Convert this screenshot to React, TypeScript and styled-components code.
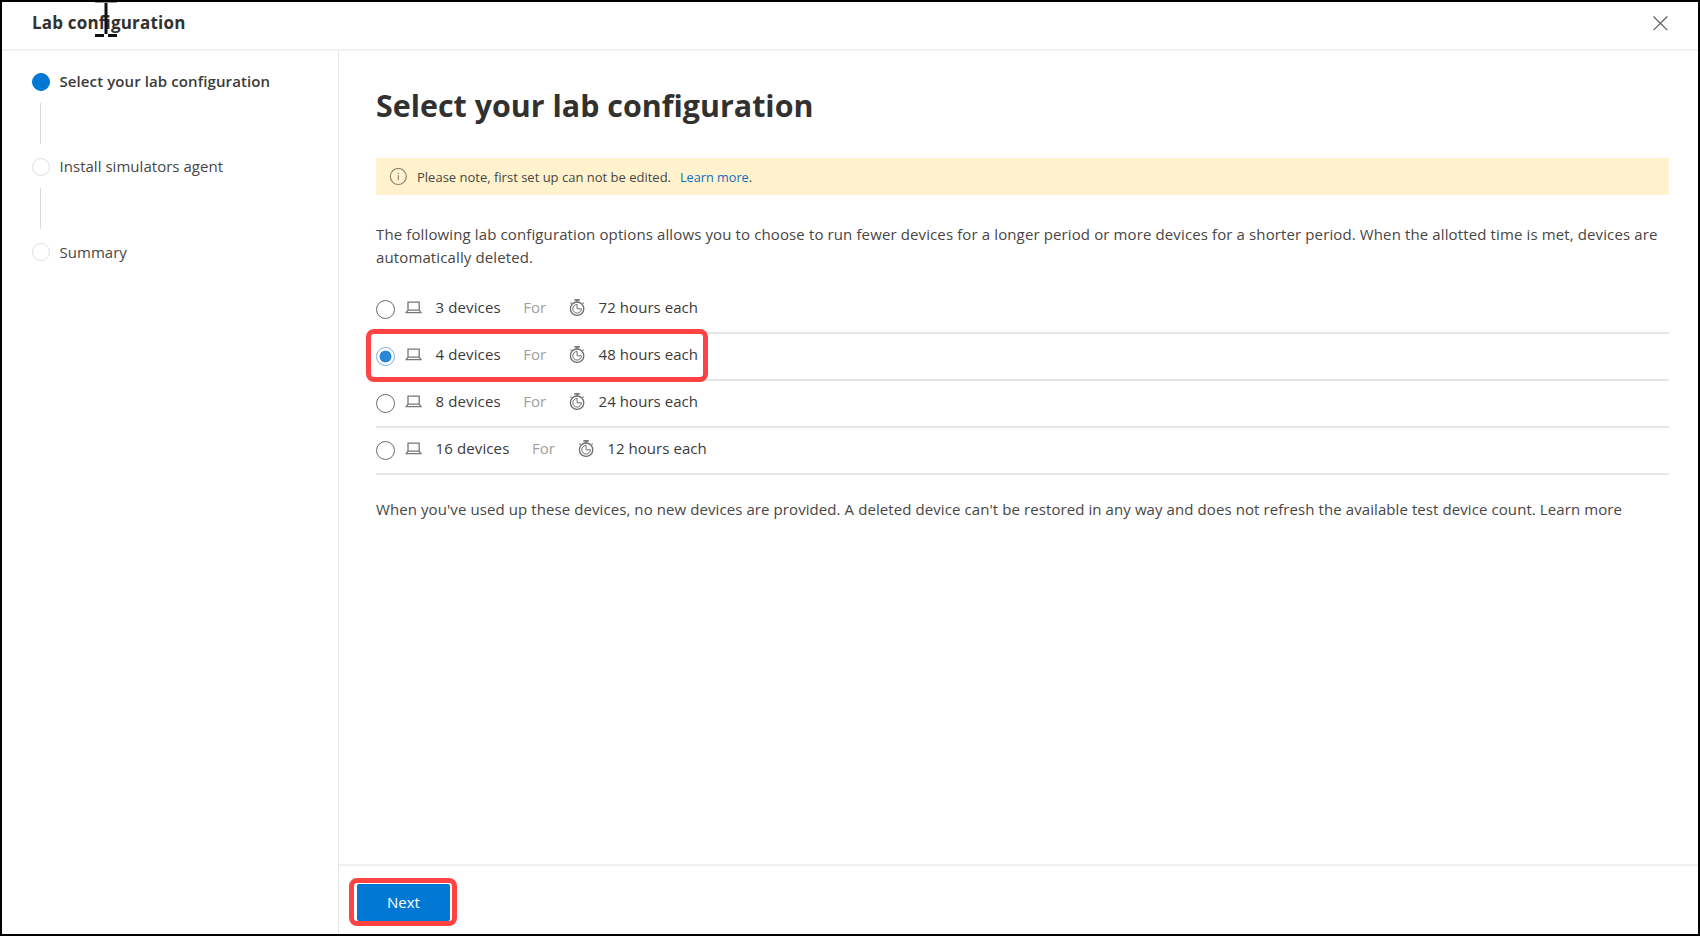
import React, { useState } from 'react';
import styled, { createGlobalStyle } from 'styled-components';

const GlobalStyle = createGlobalStyle`
  *, *::before, *::after { box-sizing: border-box; }
  body {
    margin: 0;
    background: #fff;
    color: #484644;
    font-family: 'Open Sans', 'Noto Sans', sans-serif;
    font-size: 15px;
  }
  h1, h2, p, ol, ul { margin: 0; padding: 0; list-style: none; }
`;

const Window = styled.div`
  display: flex;
  flex-direction: column;
  width: 1700px;
  height: 936px;
  border: 2px solid #000;
  background: #fff;
`;

const Header = styled.header`
  display: flex;
  justify-content: space-between;
  height: 49px;
  padding: 0 30px 0 30px;
  border-bottom: 2px solid #f2f2f2;
`;

const HeaderTitle = styled.h2`
  position: relative;
  height: 40px;
  font-size: 17px;
  line-height: 41px;
  font-weight: 700;
  letter-spacing: 0.19px;
  color: #323130;
`;

const TextCursor = styled.svg`
  position: absolute;
  left: 63px;
  top: 0;
`;

const CloseButton = styled.button`
  display: flex;
  align-self: flex-start;
  margin-top: 14px;
  padding: 0;
  border: 0;
  background: none;
`;

const Body = styled.div`
  display: flex;
  flex: 1;
  min-height: 0;
`;

const Sidebar = styled.nav`
  width: 337px;
  padding: 21px 0 0 30px;
  border-right: 1px solid #e6e6e6;
`;

const Step = styled.div`
  display: flex;
  align-items: center;
  gap: 9.5px;
  height: 19px;
`;

const StepDot = styled.span<{ $active?: boolean }>`
  width: 18px;
  height: 18px;
  border-radius: 50%;
  border: 1.5px solid ${(p) => (p.$active ? '#0078d4' : '#e0e0e0')};
  background: ${(p) => (p.$active ? '#0078d4' : '#fff')};
`;

const StepLabel = styled.span<{ $active?: boolean }>`
  line-height: 19px;
  font-weight: ${(p) => (p.$active ? 600 : 400)};
  letter-spacing: ${(p) => (p.$active ? '0.1px' : '0.03px')};
  color: ${(p) => (p.$active ? '#3b3a39' : '#484644')};
`;

const Connector = styled.div`
  width: 1px;
  height: 41px;
  margin: 12px 0 13.4px 8px;
  background: #d9d9d9;
`;

const Main = styled.main`
  display: flex;
  flex: 1;
  flex-direction: column;
  min-width: 0;
`;

const Content = styled.section`
  flex: 1;
  padding: 33px 29px 0 37px;
`;

const PageTitle = styled.h1`
  height: 40px;
  line-height: 44px;
  font-size: 30.4px;
  font-weight: 700;
  letter-spacing: 0.01px;
  color: #323130;
  white-space: nowrap;
`;

const Notice = styled.div`
  display: flex;
  align-items: center;
  height: 37px;
  margin-top: 34px;
  padding-left: 13px;
  background: #fff2cc;
  font-size: 13px;
  color: #484644;
`;

const NoticeText = styled.span`
  width: 263px;
  margin-left: 10px;
  line-height: 37px;
  padding-top: 1px;
`;

const NoticeLink = styled.a`
  padding-top: 1px;
  line-height: 37px;
  font-size: 12.7px;
  color: #106ebe;

  span { color: #484644; }
`;

const Intro = styled.p`
  height: 46px;
  margin-top: 28px;
  line-height: 23px;
  letter-spacing: 0.12px;
`;

const Options = styled.div`
  margin-top: 18px;
`;

const Option = styled.label`
  position: relative;
  display: flex;
  height: 47px;
  padding-top: 11px;
  border-bottom: 2px solid #e6e6e6;
  line-height: 18px;
  color: #3b3a39;
`;

const Radio = styled.input`
  appearance: none;
  width: 19px;
  height: 19px;
  margin: 2px 10px 0 0;
  border: 1.3px solid #6b6b6b;
  border-radius: 50%;

  &:checked {
    border-color: #7aaee8;
    background: radial-gradient(circle, #2b88d8 5.6px, transparent 6.3px);
  }
`;

const LaptopSlot = styled.svg`
  margin: 3px 13.5px 0 0;
`;

const Quantity = styled.span`
  margin-right: 22.5px;
  letter-spacing: 0.12px;
`;

const Joiner = styled.span`
  margin-right: 23px;
  color: #a19f9d;
`;

const TimerSlot = styled.svg`
  margin: 0 12.5px 0 0;
`;

const Duration = styled.span`
  letter-spacing: 0.05px;
`;

const OptionHighlight = styled.span`
  position: absolute;
  z-index: 1;
  left: -10px;
  top: -5px;
  width: 342px;
  height: 53px;
  border: 5px solid #ff4343;
  border-radius: 8px;
`;

const Footnote = styled.p`
  margin-top: 23px;
  line-height: 23px;
  letter-spacing: 0.085px;
  white-space: nowrap;
`;

const Footer = styled.footer`
  height: 70px;
  padding: 12px 0 0 10px;
  border-top: 2px solid #f0f0f0;
`;

const ButtonHighlight = styled.div`
  width: 108px;
  height: 48px;
  padding: 1px 2px 0 3px;
  border: 5px solid #ff4343;
  border-radius: 8px;
`;

const NextButton = styled.button`
  display: block;
  width: 93px;
  height: 37px;
  padding: 0;
  border: 0;
  border-radius: 2px;
  background: #0078d4;
  color: #fff;
  font-family: inherit;
  font-size: 15px;
  line-height: 37px;
`;

const LaptopIcon = () => (
  <LaptopSlot width="17" height="13" viewBox="0 0 17 13" fill="none" stroke="#777" strokeWidth="1.3">
    <path d="M3 9.4V1.2H14.2V9.4M3 9.2H14.2M3 9.2L1.2 11.7H16L14.2 9.2" />
  </LaptopSlot>
);

const TimerIcon = () => (
  <TimerSlot width="17" height="19" viewBox="0 0 17 19" fill="none" stroke="#6e6e6e" strokeWidth="1.3">
    <circle cx="8.1" cy="10.7" r="6.7" />
    <path d="M5.4 1.9H10.8" strokeWidth="1.6" />
    <path d="M8.1 2V4.2M2.6 5.6L1.6 4.6M13.6 5.6L14.6 4.6" />
    <path d="M8.1 6.4V10.8H12.4A4.3 4.3 0 1 1 8.1 6.5" strokeWidth="1" />
  </TimerSlot>
);

const InfoIcon = () => (
  <svg width="18" height="18" viewBox="0 0 18 18" fill="none" stroke="#8a8577">
    <circle cx="9.3" cy="8.5" r="8" strokeWidth="1.2" />
    <path d="M9.3 7.2V12.3M9.3 4.7V6" strokeWidth="1.2" />
  </svg>
);

const CloseIcon = () => (
  <svg width="15" height="15" viewBox="0 0 15 15" stroke="#605e5c" strokeWidth="1.2">
    <path d="M0.5 0.5L14.3 14.1M14.3 0.5L0.5 14.1" />
  </svg>
);

const steps = ['Select your lab configuration', 'Install simulators agent', 'Summary'];

const options = [
  { devices: 3, hours: 72 },
  { devices: 4, hours: 48 },
  { devices: 8, hours: 24 },
  { devices: 16, hours: 12 },
];

export default function App() {
  const [selected, setSelected] = useState(4);

  return (
    <>
      <GlobalStyle />
      <Window>
        <Header>
          <HeaderTitle>
            Lab configuration
            <TextCursor width="22" height="36" viewBox="0 0 22 36" fill="#111">
              <path d="M9.5 0H12.5V32H9.5Z M0 32H9V35H0Z M13 32H22V35H13Z" />
              <path d="M0 0H22V1H0Z" fill="#999" />
            </TextCursor>
          </HeaderTitle>
          <CloseButton aria-label="Close"><CloseIcon /></CloseButton>
        </Header>
        <Body>
          <Sidebar>
            {steps.map((label, index) => (
              <React.Fragment key={label}>
                {index > 0 && <Connector />}
                <Step>
                  <StepDot $active={index === 0} />
                  <StepLabel $active={index === 0}>{label}</StepLabel>
                </Step>
              </React.Fragment>
            ))}
          </Sidebar>
          <Main>
            <Content>
              <PageTitle>Select your lab configuration</PageTitle>
              <Notice>
                <InfoIcon />
                <NoticeText>Please note, first set up can not be edited.</NoticeText>
                <NoticeLink>Learn more<span>.</span></NoticeLink>
              </Notice>
              <Intro>
                The following lab configuration options allows you to choose to run fewer devices for a longer
                period or more devices for a shorter period. When the allotted time is met, devices are
                automatically deleted.
              </Intro>
              <Options>
                {options.map(({ devices, hours }) => (
                  <Option key={devices}>
                    <Radio
                      type="radio"
                      name="configuration"
                      checked={selected === devices}
                      onChange={() => setSelected(devices)}
                    />
                    <LaptopIcon />
                    <Quantity>{devices} devices</Quantity>
                    <Joiner>For</Joiner>
                    <TimerIcon />
                    <Duration>{hours} hours each</Duration>
                    {selected === devices && <OptionHighlight />}
                  </Option>
                ))}
              </Options>
              <Footnote>
                When you've used up these devices, no new devices are provided. A deleted device can't be
                restored in any way and does not refresh the available test device count. Learn more
              </Footnote>
            </Content>
            <Footer>
              <ButtonHighlight>
                <NextButton>Next</NextButton>
              </ButtonHighlight>
            </Footer>
          </Main>
        </Body>
      </Window>
    </>
  );
}
